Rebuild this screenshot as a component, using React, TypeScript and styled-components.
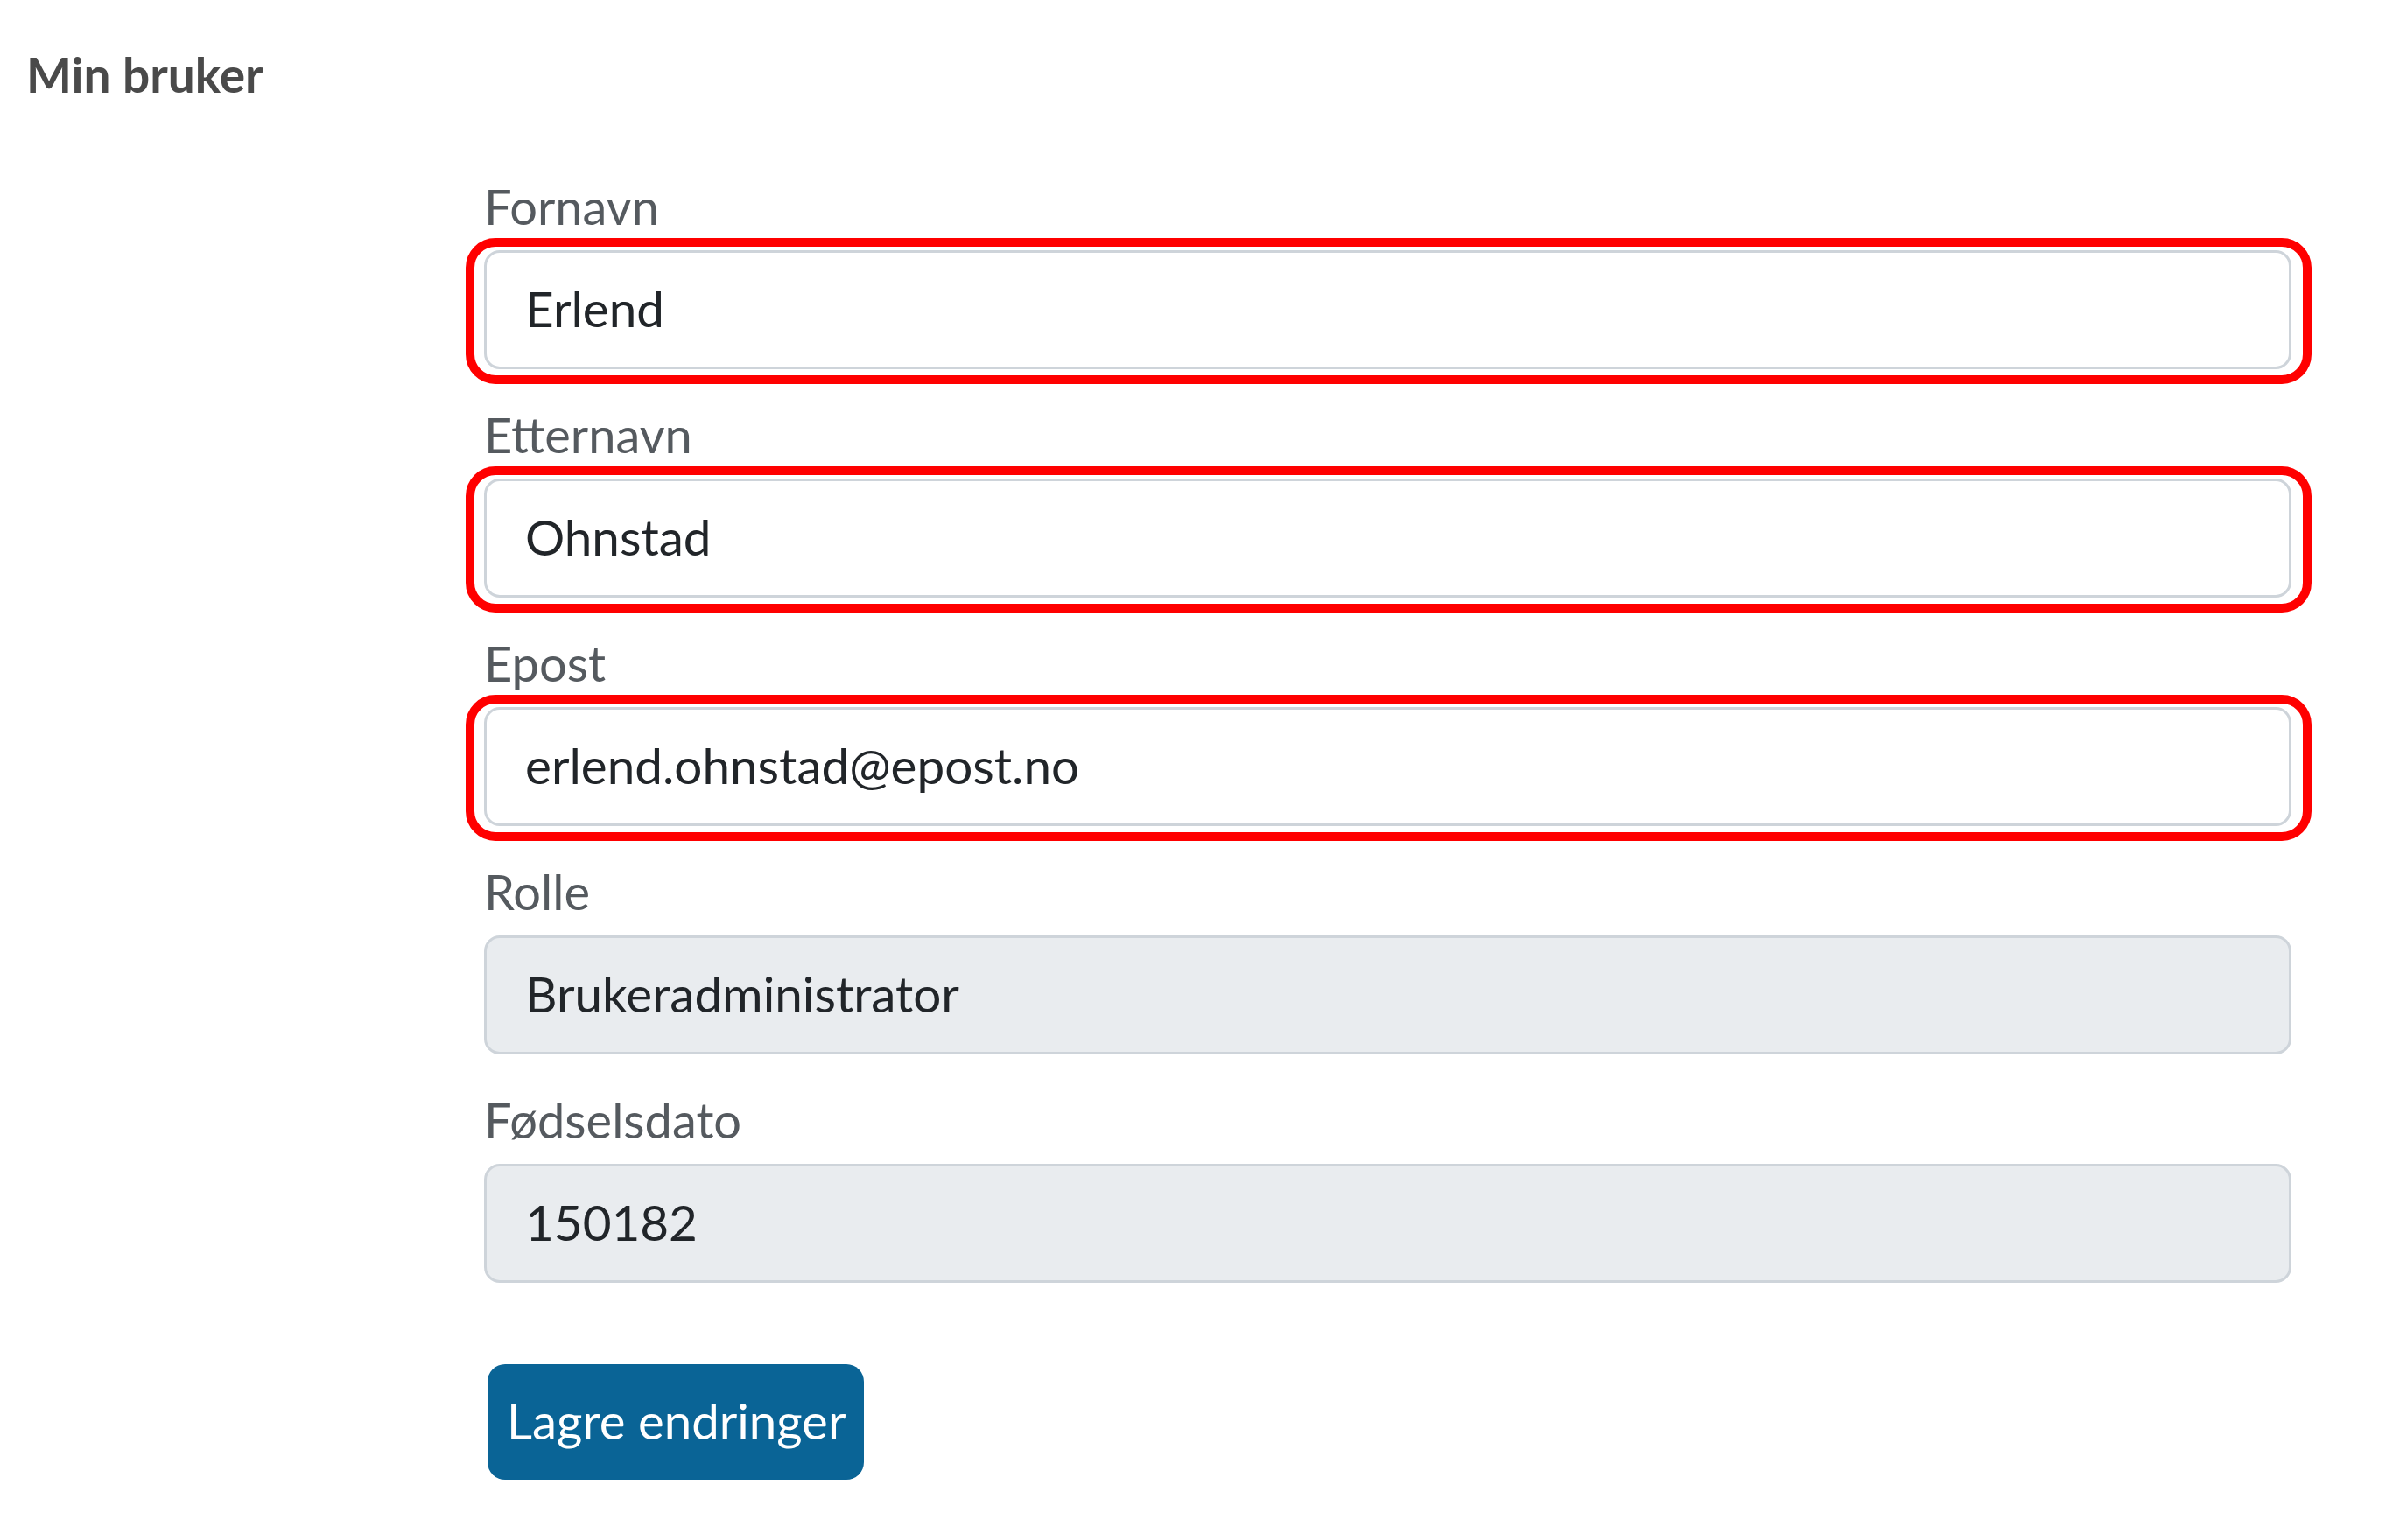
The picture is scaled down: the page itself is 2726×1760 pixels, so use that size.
import styled, { createGlobalStyle } from 'styled-components';

const GlobalStyle = createGlobalStyle`
  html, body {
    margin: 0;
    padding: 0;
    background: #ffffff;
  }
  body {
    font-family: Lato, "Noto Sans", sans-serif;
  }
`;

const Page = styled.div`
  padding: 50px 0 0 30px;
  min-height: 1710px;
`;

const Title = styled.h1`
  margin: 0;
  font-size: 55px;
  line-height: 70px;
  font-weight: 700;
  color: #4a4a4a;
`;

const Form = styled.form`
  margin: 81px 0 0 523px;
  width: 2065px;
  display: flex;
  flex-direction: column;
  gap: 40px;
`;

const Field = styled.div`
  display: flex;
  flex-direction: column;
`;

const Label = styled.label`
  display: block;
  font-size: 56px;
  line-height: 70px;
  color: #555a5f;
  margin-bottom: 15px;
`;

const Highlight = styled.div<{ $on: boolean }>`
  position: relative;

  &::before {
    content: '';
    display: ${(p) => (p.$on ? 'block' : 'none')};
    position: absolute;
    top: -14px;
    bottom: -17px;
    left: -21px;
    right: -23px;
    border: 10px solid #ff0000;
    border-radius: 34px;
    pointer-events: none;
  }
`;

const Input = styled.input<{ $locked?: boolean }>`
  box-sizing: border-box;
  display: block;
  width: 100%;
  height: 136px;
  padding: 0 44px 5px;
  font-family: Lato, "Noto Sans", sans-serif;
  font-size: 56.6px;
  color: #212529;
  background: ${(p) => (p.$locked ? '#e9ecef' : '#ffffff')};
  border: 3px solid #ced4da;
  border-radius: 18px;
  outline: none;
`;

const SaveButton = styled.button`
  margin: 93px 0 0 527px;
  width: 430px;
  height: 132px;
  padding: 0 22px 4px;
  font-family: Lato, "Noto Sans", sans-serif;
  font-size: 56.4px;
  color: #ffffff;
  background: #0a6496;
  border: none;
  border-radius: 20px;
  cursor: pointer;
  white-space: nowrap;
`;

type FieldData = {
  id: string;
  label: string;
  value: string;
  marked: boolean;
  locked: boolean;
};

const fields: FieldData[] = [
  { id: 'fornavn', label: 'Fornavn', value: 'Erlend', marked: true, locked: false },
  { id: 'etternavn', label: 'Etternavn', value: 'Ohnstad', marked: true, locked: false },
  { id: 'epost', label: 'Epost', value: 'erlend.ohnstad@epost.no', marked: true, locked: false },
  { id: 'rolle', label: 'Rolle', value: 'Brukeradministrator', marked: false, locked: true },
  { id: 'fodselsdato', label: 'Fødselsdato', value: '150182', marked: false, locked: true },
];

export default function App() {
  return (
    <>
      <GlobalStyle />
      <Page>
        <Title>Min bruker</Title>
        <Form onSubmit={(e) => e.preventDefault()}>
          {fields.map((f) => (
            <Field key={f.id}>
              <Label htmlFor={f.id}>{f.label}</Label>
              <Highlight $on={f.marked}>
                <Input id={f.id} defaultValue={f.value} readOnly $locked={f.locked} />
              </Highlight>
            </Field>
          ))}
        </Form>
        <SaveButton type="button">Lagre endringer</SaveButton>
      </Page>
    </>
  );
}
